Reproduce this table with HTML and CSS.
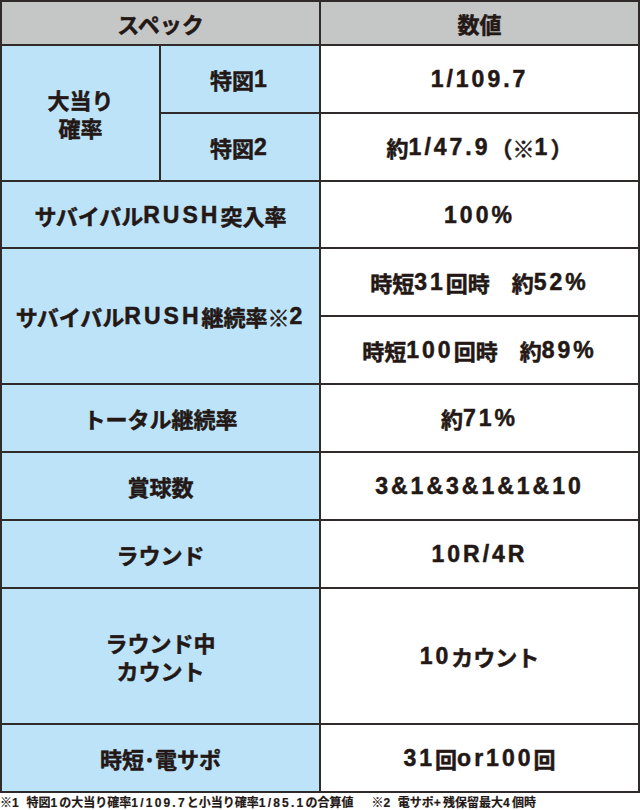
FILE: index.html
```html
<!DOCTYPE html>
<html lang="ja">
<head>
<meta charset="utf-8">
<title>スペック</title>
<link rel="stylesheet" href="styles.css">
</head>
<body>
<div class="spec">
  <div class="cell head c12">スペック</div>
  <div class="cell head c3">数値</div>

  <div class="cell label c1 r23">大当り<br>確率</div>
  <div class="cell label c2">特図<span class="en">1</span></div>
  <div class="cell value c3"><span class="en">1/109.7</span></div>
  <div class="cell label c2">特図<span class="en">2</span></div>
  <div class="cell value c3">約<span class="en">1/47.9</span>（※<span class="en">1</span>）</div>

  <div class="cell label c12">サバイバル<span class="en">RUSH</span>突入率</div>
  <div class="cell value c3"><span class="en">100%</span></div>

  <div class="cell label c12 r56">サバイバル<span class="en">RUSH</span>継続率※<span class="en">2</span></div>
  <div class="cell value c3">時短<span class="en">31</span>回時　約<span class="en">52%</span></div>
  <div class="cell value c3">時短<span class="en">100</span>回時　約<span class="en">89%</span></div>

  <div class="cell label c12">トータル継続率</div>
  <div class="cell value c3">約<span class="en">71%</span></div>

  <div class="cell label c12">賞球数</div>
  <div class="cell value c3"><span class="en">3&amp;1&amp;3&amp;1&amp;1&amp;10</span></div>

  <div class="cell label c12">ラウンド</div>
  <div class="cell value c3"><span class="en">10R/4R</span></div>

  <div class="cell label c12">ラウンド中<br>カウント</div>
  <div class="cell value c3"><span class="en">10</span>カウント</div>

  <div class="cell label c12">時短･電サポ</div>
  <div class="cell value c3"><span class="en">31</span>回<span class="en">or100</span>回</div>
</div>
<p class="note">※<span class="en">1 </span>特図<span class="en">1</span>の大当り確率<span class="en">1/109.7</span>と小当り確率<span class="en">1/85.1</span>の合算値<span class="gap"></span>※<span class="en">2 </span>電サポ<span class="en">+</span>残保留最大<span class="en">4</span>個時</p>
</body>
</html>
```
FILE: styles.css
```css
html, body {
  margin: 0;
  padding: 0;
  background: #ffffff;
}

body {
  width: 640px;
  height: 810px;
  overflow: hidden;
  font-family: "Noto Sans CJK JP", "Liberation Sans", sans-serif;
  font-weight: 700;
  color: #231815;
}

.spec {
  display: grid;
  grid-template-columns: 157px 158px 317px;
  grid-template-rows: 42px 66px 66px 65px 66px 66px 66px 66px 66px 134px 66px;
  gap: 2px;
  padding: 2px;
  width: 640px;
  box-sizing: border-box;
  background: #2f2b2a;
}

.cell {
  display: flex;
  align-items: center;
  justify-content: center;
  text-align: center;
  font-size: 22px;
  line-height: 28px;
  -webkit-text-stroke: 0.5px #231815;
}

.head {
  background: #c5c6c6;
}

.label {
  background: #bde3f8;
}

.value {
  background: #ffffff;
}

.c1 { grid-column: 1; }
.c2 { grid-column: 2; }
.c12 { grid-column: 1 / 3; }
.c3 { grid-column: 3; }
.r23 { grid-row: 2 / 4; }
.r56 { grid-row: 5 / 7; }

.en {
  font-family: "Liberation Sans", Arial, sans-serif;
  font-weight: 700;
  font-size: 23px;
  letter-spacing: 3px;
  -webkit-text-stroke: 0.5px #231815;
}

.note {
  margin: 2px 0 0 0;
  font-size: 12px;
  line-height: 14px;
  white-space: nowrap;
  -webkit-text-stroke: 0.2px #231815;
}

.note .en {
  font-size: 12px;
  letter-spacing: 2.2px;
  -webkit-text-stroke: 0.2px #231815;
}

.note .gap {
  display: inline-block;
  width: 18px;
}
```
